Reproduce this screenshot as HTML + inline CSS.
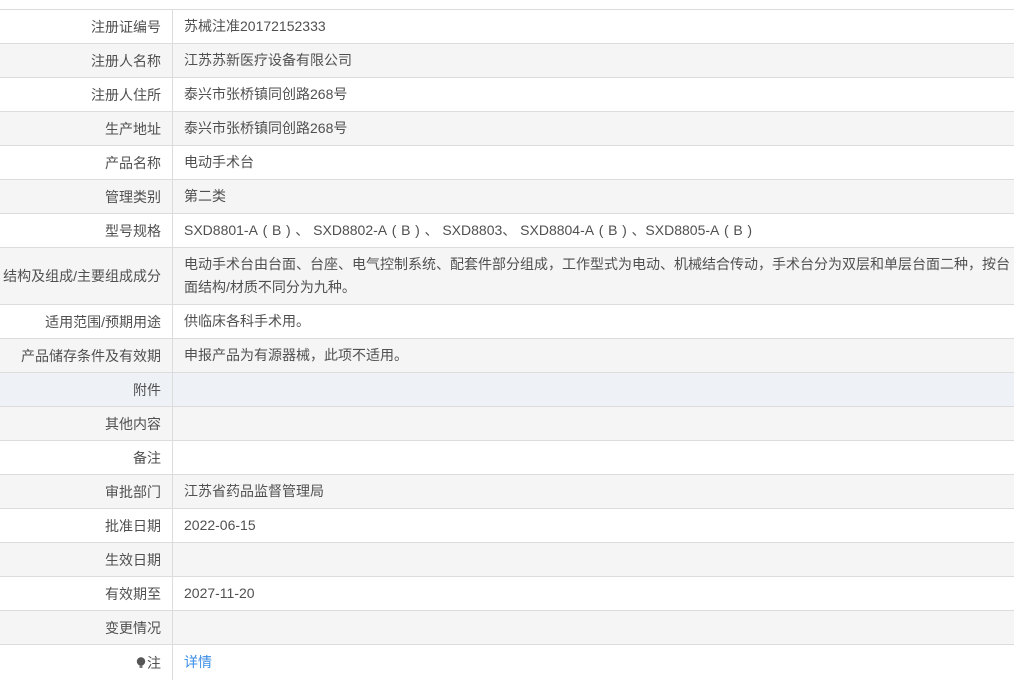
<!DOCTYPE html>
<html><head><meta charset="utf-8"><style>
html,body{margin:0;padding:0;background:#fff;width:1014px;height:680px;overflow:hidden}
body{font-family:"Liberation Sans","Noto Sans CJK SC",sans-serif;font-size:14px;color:#505050}
.r{position:absolute;left:0;width:1014px;border-top:1px solid #dcdcdc;box-sizing:border-box;display:flex}
.g{background:#f5f5f5}.b{background:#eef1f6}
.l{width:173px;flex:none;border-right:1px solid #dcdcdc;box-sizing:border-box;text-align:right;padding-right:11px;display:flex;align-items:center;justify-content:flex-end;white-space:nowrap}
.v{padding-left:11px;display:flex;align-items:center;line-height:23px;white-space:nowrap}
.v>div{white-space:nowrap}
.p{display:inline-block;width:14px;text-align:center}
a{color:#3a8ee6;text-decoration:none}
</style></head><body>
<div class="r" style="top:9px;height:34px"><div class="l">注册证编号</div><div class="v">苏械注准20172152333</div></div>
<div class="r g" style="top:43px;height:34px"><div class="l">注册人名称</div><div class="v">江苏苏新医疗设备有限公司</div></div>
<div class="r" style="top:77px;height:34px"><div class="l">注册人住所</div><div class="v">泰兴市张桥镇同创路268号</div></div>
<div class="r g" style="top:111px;height:34px"><div class="l">生产地址</div><div class="v">泰兴市张桥镇同创路268号</div></div>
<div class="r" style="top:145px;height:34px"><div class="l">产品名称</div><div class="v">电动手术台</div></div>
<div class="r g" style="top:179px;height:34px"><div class="l">管理类别</div><div class="v">第二类</div></div>
<div class="r" style="top:213px;height:34px"><div class="l">型号规格</div><div class="v"><div>SXD8801-A<span class="p">(</span>B<span class="p">)</span>、 SXD8802-A<span class="p">(</span>B<span class="p">)</span>、 SXD8803、 SXD8804-A<span class="p">(</span>B<span class="p">)</span>、SXD8805-A<span class="p">(</span>B<span class="p">)</span></div></div></div>
<div class="r g" style="top:247px;height:57px"><div class="l">结构及组成/主要组成成分</div><div class="v"><div>电动手术台由台面、台座、电气控制系统、配套件部分组成，工作型式为电动、机械结合传动，手术台分为双层和单层台面二种，按台<br>面结构/材质不同分为九种。</div></div></div>
<div class="r" style="top:304px;height:34px"><div class="l">适用范围/预期用途</div><div class="v">供临床各科手术用。</div></div>
<div class="r g" style="top:338px;height:34px"><div class="l">产品储存条件及有效期</div><div class="v">申报产品为有源器械，此项不适用。</div></div>
<div class="r b" style="top:372px;height:34px"><div class="l">附件</div><div class="v"></div></div>
<div class="r g" style="top:406px;height:34px"><div class="l">其他内容</div><div class="v"></div></div>
<div class="r" style="top:440px;height:34px"><div class="l">备注</div><div class="v"></div></div>
<div class="r g" style="top:474px;height:34px"><div class="l">审批部门</div><div class="v">江苏省药品监督管理局</div></div>
<div class="r" style="top:508px;height:34px"><div class="l">批准日期</div><div class="v">2022-06-15</div></div>
<div class="r g" style="top:542px;height:34px"><div class="l">生效日期</div><div class="v"></div></div>
<div class="r" style="top:576px;height:34px"><div class="l">有效期至</div><div class="v">2027-11-20</div></div>
<div class="r g" style="top:610px;height:34px"><div class="l">变更情况</div><div class="v"></div></div>
<div class="r" style="top:644px;height:36px"><div class="l"><svg width="10" height="12" viewBox="0 0 10 12" style="margin-right:1px"><circle cx="5" cy="4.5" r="4.2" fill="#555"/><rect x="3.5" y="8.5" width="3" height="2.5" fill="#777"/></svg>注</div><div class="v"><a>详情</a></div></div>
</body></html>
